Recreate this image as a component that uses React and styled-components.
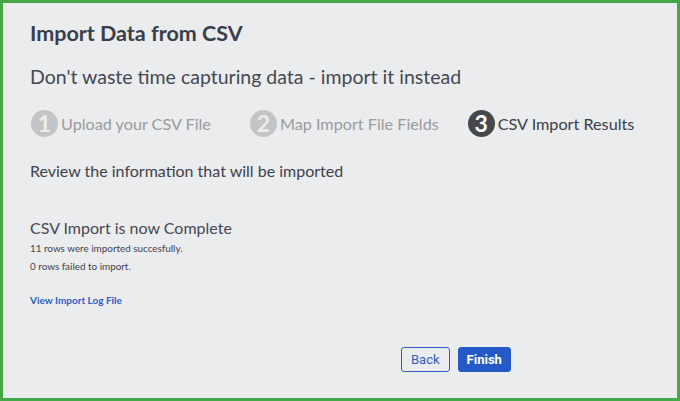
import styled, { createGlobalStyle } from "styled-components";

const GlobalStyle = createGlobalStyle`
  html, body {
    margin: 0;
    padding: 0;
  }
  body {
    font-family: Lato, "Liberation Sans", sans-serif;
    background: #ebeced;
  }
`;

const Frame = styled.div`
  box-sizing: border-box;
  width: 680px;
  height: 401px;
  border: 3px solid #43a845;
  background: #ebeced;
  padding: 16px 27px 0;
  color: #3b3f4a;
`;

const Title = styled.h1`
  margin: 0;
  font-size: 21.5px;
  font-weight: 700;
  line-height: 28px;
  color: #3a3e4b;
`;

const Subtitle = styled.h2`
  margin: 18px 0 0;
  font-size: 19.5px;
  font-weight: 400;
  line-height: 24px;
  color: #444852;
`;

const Steps = styled.div`
  display: flex;
  align-items: center;
  margin-top: 20px;
  height: 28px;
`;

const Step = styled.div`
  display: flex;
  align-items: center;
  margin-right: ${(p) => p.$gap}px;
  font-size: 16.2px;
  color: ${(p) => (p.$active ? "#3a3e4b" : "#9a9b9d")};
`;

const Circle = styled.span`
  display: flex;
  align-items: center;
  justify-content: center;
  width: 27px;
  height: 27px;
  border-radius: 50%;
  margin-left: 1px;
  margin-right: 3px;
  background: ${(p) => (p.$active ? "#47484d" : "#c3c4c6")};
  color: ${(p) => (p.$active ? "#ffffff" : "#ebeced")};
  font-size: 23px;
  font-weight: 700;
  line-height: 1;
`;

const Lead = styled.p`
  margin: 24px 0 0;
  font-size: 16px;
  line-height: 20px;
  color: #3e424c;
`;

const ResultHead = styled.h3`
  margin: 36px 0 0;
  font-size: 16px;
  font-weight: 400;
  line-height: 22px;
  color: #444852;
`;

const Small = styled.p`
  margin: ${(p) => p.$top}px 0 0;
  font-size: 9.9px;
  line-height: 12px;
  color: #3e424c;
`;

const LogLink = styled.a`
  display: block;
  margin-top: 22px;
  font-size: 10px;
  line-height: 12px;
  font-weight: 700;
  color: #2b5dc4;
  text-decoration: none;
`;

const Actions = styled.div`
  display: flex;
  gap: 8px;
  margin-top: 41px;
  padding-left: 371px;
`;

const Button = styled.button`
  box-sizing: border-box;
  height: 25px;
  padding: 0 ${(p) => (p.$primary ? 8 : 9)}px;
  border-radius: 3px;
  border: 1px solid ${(p) => (p.$primary ? "#2459c7" : "#2f5fc6")};
  background: ${(p) => (p.$primary ? "#2459c7" : "transparent")};
  color: ${(p) => (p.$primary ? "#ffffff" : "#2f5fc6")};
  font-family: Roboto, "Liberation Sans", sans-serif;
  font-size: 13px;
  font-weight: ${(p) => (p.$primary ? 700 : 400)};
`;

const steps = [
  { n: 1, label: "Upload your CSV File", gap: 38 },
  { n: 2, label: "Map Import File Fields", gap: 28 },
  { n: 3, label: "CSV Import Results", gap: 0, active: true },
];

export default function App() {
  return (
    <>
      <GlobalStyle />
      <Frame>
        <Title>Import Data from CSV</Title>
        <Subtitle>Don't waste time capturing data - import it instead</Subtitle>
        <Steps>
          {steps.map((s) => (
            <Step key={s.n} $active={s.active} $gap={s.gap}>
              <Circle $active={s.active}>{s.n}</Circle>
              {s.label}
            </Step>
          ))}
        </Steps>
        <Lead>Review the information that will be imported</Lead>
        <ResultHead>CSV Import is now Complete</ResultHead>
        <Small $top={3}>11 rows were imported succesfully.</Small>
        <Small $top={6}>0 rows failed to import.</Small>
        <LogLink href="#">View Import Log File</LogLink>
        <Actions>
          <Button>Back</Button>
          <Button $primary>Finish</Button>
        </Actions>
      </Frame>
    </>
  );
}
